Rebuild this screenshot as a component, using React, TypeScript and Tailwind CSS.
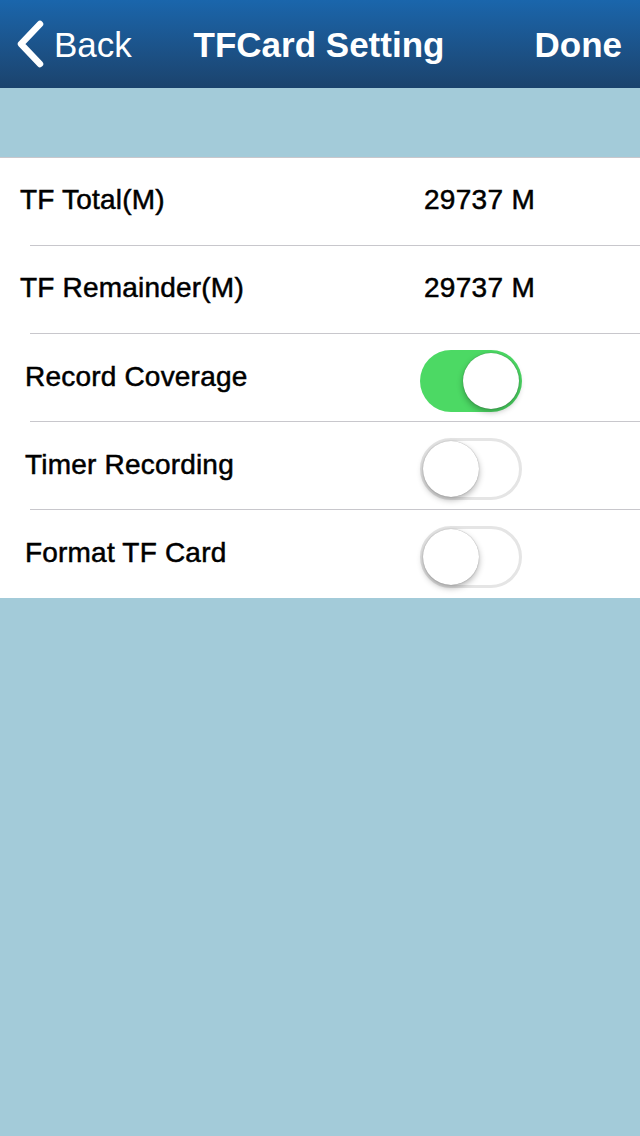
import React from "react";

function Toggle({ on }: { on: boolean }) {
  return (
    <div
      className={`w-[102px] h-[62px] rounded-full flex items-center p-[3px] mt-[6px] ${
        on ? "bg-[#4cd964] justify-end" : "bg-white border-[3px] border-[#e5e5e5] justify-start p-0"
      }`}
    >
      <div
        className={`w-[56px] h-[56px] rounded-full bg-white shadow-[0_3px_6px_rgba(0,0,0,0.3),0_0_1px_rgba(0,0,0,0.4)] ${
          on ? "" : "-ml-[3px]"
        }`}
      />
    </div>
  );
}

function Row({
  label,
  value,
  toggle,
  last,
}: {
  label: string;
  value?: string;
  toggle?: boolean;
  last?: boolean;
}) {
  const isValue = value !== undefined;
  return (
    <div className={`h-[88px] flex items-center ${last ? "" : "border-b border-[#c8c7cc] ml-[30px]"}`}>
      <div className={`${last ? "" : "-ml-[30px]"} flex items-center w-[640px]`}>
        <div
          className={`${isValue ? "pl-[20px] w-[424px] pb-[4px]" : "pl-[25px] w-[420px] pb-[2px]"} text-[28px] text-black leading-none tracking-[0.2px] [-webkit-text-stroke:0.5px_black]`}
        >
          {label}
        </div>
        {isValue ? (
          <div className="text-[28px] text-black leading-none tracking-[0.3px] pb-[4px] [-webkit-text-stroke:0.5px_black]">
            {value}
          </div>
        ) : (
          <Toggle on={!!toggle} />
        )}
      </div>
    </div>
  );
}

export default function App() {
  return (
    <div
      className="w-[640px] h-[1136px] bg-[#a3cbd9] flex flex-col"
      style={{ fontFamily: '"Liberation Sans", Arial, sans-serif' }}
    >
      <div className="h-[88px] bg-gradient-to-b from-[#1a66ac] to-[#1b436d] flex items-center justify-between text-white px-[16px] pr-[18px]">
        <div className="flex items-center w-[150px]">
          <svg width="30" height="48" viewBox="0 0 30 48" className="mr-[8px]">
            <path d="M24 4 L5 24 L24 44" fill="none" stroke="white" strokeWidth="6.5" strokeLinecap="round" strokeLinejoin="round" />
          </svg>
          <span className="text-[35px] leading-none">Back</span>
        </div>
        <div className="text-[35px] font-bold leading-none">TFCard Setting</div>
        <div className="w-[150px] flex justify-end text-[35px] font-bold leading-none">Done</div>
      </div>
      <div className="h-[69px]" />
      <div className="bg-white border-t border-[#c8c7cc]">
        <Row label="TF Total(M)" value="29737 M" />
        <Row label="TF Remainder(M)" value="29737 M" />
        <Row label="Record Coverage" toggle={true} />
        <Row label="Timer Recording" toggle={false} />
        <Row label="Format TF Card" toggle={false} last />
      </div>
    </div>
  );
}
